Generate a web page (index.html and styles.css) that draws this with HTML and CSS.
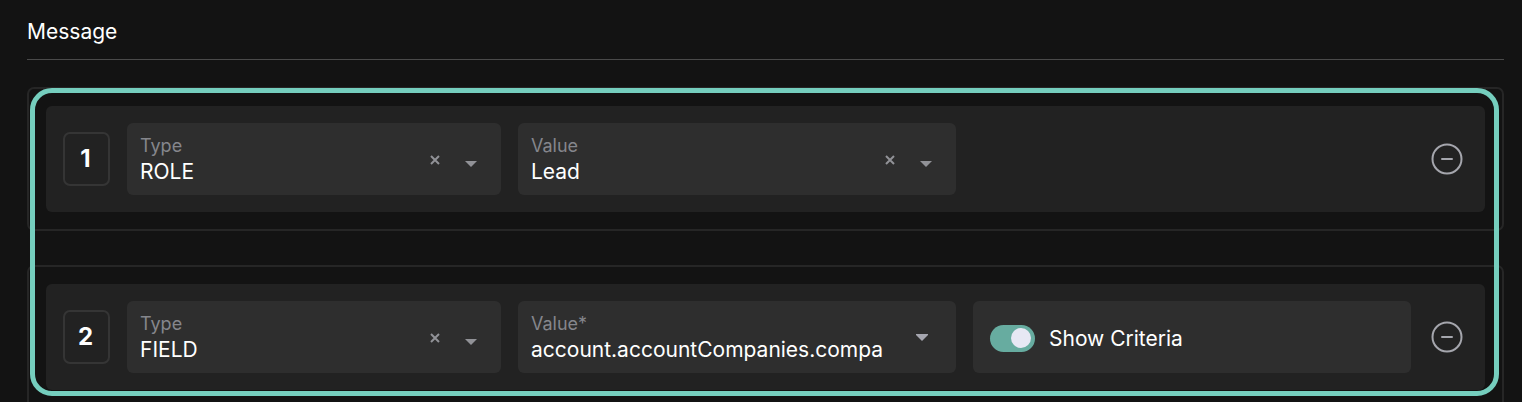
FILE: index.html
```html
<!DOCTYPE html>
<html lang="en">
<head>
    <meta charset="UTF-8">
    <meta name="viewport" content="width=device-width, initial-scale=1.0">
    <title>Message</title>
    <link rel="stylesheet" href="styles.css">
</head>
<body>

    <h2 class="section-title">Message</h2>

    <div class="groups">
        <div class="group">
            <div class="row">
                <div class="row-number">1</div>

                <div class="field">
                    <div class="field-text">
                        <label for="type1">Type</label>
                        <select id="type1">
                            <option selected>ROLE</option>
                            <option>FIELD</option>
                        </select>
                    </div>
                    <button type="button" class="clear-button" aria-label="Clear type">
                        <svg width="10" height="10" viewBox="0 0 10 10"><path d="M1 1L9 9M9 1L1 9"/></svg>
                    </button>
                    <svg class="caret" width="12" height="6" viewBox="0 0 12 6"><path d="M0 0H12L6 6Z"/></svg>
                </div>

                <div class="field">
                    <div class="field-text">
                        <label for="value1">Value</label>
                        <select id="value1">
                            <option selected>Lead</option>
                        </select>
                    </div>
                    <button type="button" class="clear-button" aria-label="Clear value">
                        <svg width="10" height="10" viewBox="0 0 10 10"><path d="M1 1L9 9M9 1L1 9"/></svg>
                    </button>
                    <svg class="caret" width="12" height="6" viewBox="0 0 12 6"><path d="M0 0H12L6 6Z"/></svg>
                </div>

                <button type="button" class="remove-button" aria-label="Remove row 1">
                    <svg width="32" height="32" viewBox="0 0 32 32"><circle cx="16" cy="16" r="14.5"/><path d="M11 16H21"/></svg>
                </button>
            </div>
        </div>

        <div class="group">
            <div class="row">
                <div class="row-number">2</div>

                <div class="field">
                    <div class="field-text">
                        <label for="type2">Type</label>
                        <select id="type2">
                            <option>ROLE</option>
                            <option selected>FIELD</option>
                        </select>
                    </div>
                    <button type="button" class="clear-button" aria-label="Clear type">
                        <svg width="10" height="10" viewBox="0 0 10 10"><path d="M1 1L9 9M9 1L1 9"/></svg>
                    </button>
                    <svg class="caret" width="12" height="6" viewBox="0 0 12 6"><path d="M0 0H12L6 6Z"/></svg>
                </div>

                <div class="field field-search">
                    <div class="field-text">
                        <label for="value2">Value*</label>
                        <input type="text" id="value2" value="account.accountCompanies.compa">
                    </div>
                    <button type="button" class="open-button" aria-label="Open list">
                        <svg width="12" height="7" viewBox="0 0 12 7"><path d="M0 0H12V1L6 7L0 1Z"/></svg>
                    </button>
                </div>

                <label class="field field-switch">
                    <input type="checkbox" class="switch" checked>
                    <span>Show Criteria</span>
                </label>

                <button type="button" class="remove-button" aria-label="Remove row 2">
                    <svg width="32" height="32" viewBox="0 0 32 32"><circle cx="16" cy="16" r="14.5"/><path d="M11 16H21"/></svg>
                </button>
            </div>
        </div>

        <div class="highlight"></div>
    </div>

</body>
</html>
```
FILE: styles.css
```css
* {
    box-sizing: border-box;
}

body {
    font-family: 'Inter', 'Liberation Sans', sans-serif;
    font-size: 21px;
    background-color: #131313;
    color: #fff;
    margin: 0;
    padding: 18px 18px 0 27px;
    height: 100vh;
    overflow: hidden;
}

.section-title {
    margin: 0 0 27px;
    padding-bottom: 13px;
    border-bottom: 1px solid #4a4a4a;
    font-size: 21px;
    font-weight: 400;
    line-height: 28px;
}

.groups {
    position: relative;
    display: flex;
    flex-direction: column;
    gap: 34px;
}

.group {
    padding: 17px;
    border: 2px solid #262626;
    border-radius: 7px;
}

.row {
    display: grid;
    grid-template-columns: 47px 374fr 438fr 438fr 40px;
    align-items: center;
    gap: 17px;
    padding: 17px;
    border-radius: 6px;
    background-color: #222;
}

.row-number {
    display: flex;
    align-items: center;
    justify-content: center;
    height: 54px;
    padding: 0 2px 2px 0;
    border: 2px solid #353535;
    border-radius: 7px;
    font-size: 24px;
    font-weight: 700;
}

.field {
    display: flex;
    align-items: center;
    min-width: 0;
    height: 72px;
    padding: 0 24px 0 13px;
    border-radius: 6px;
    background-color: #2e2e2e;
}

.field-text {
    display: flex;
    flex: 1;
    flex-direction: column;
    min-width: 0;
    padding-top: 2px;
}

.field-text label {
    color: #85868c;
    font-size: 18px;
    line-height: 24px;
}

.field-text select,
.field-text input {
    appearance: none;
    width: 100%;
    height: 28px;
    margin: 0;
    padding: 0;
    border: none;
    outline: none;
    background: none;
    color: #fff;
    font: inherit;
    line-height: 28px;
}

button {
    display: flex;
    align-items: center;
    justify-content: center;
    padding: 0;
    border: none;
    background: none;
    cursor: pointer;
}

.clear-button {
    width: 22px;
    height: 24px;
    margin: 2px 19px 0 0;
}

.clear-button path {
    stroke: #919297;
    stroke-width: 2;
}

.caret {
    margin-top: 9px;
    fill: #919297;
}

.field-search {
    padding-right: 28px;
}

.open-button {
    width: 12px;
    height: 24px;
    margin-left: 28px;
    fill: #a5a6af;
}

.field-switch {
    gap: 14px;
    padding: 2px 17px 0;
    cursor: pointer;
}

.switch {
    appearance: none;
    display: flex;
    align-items: center;
    justify-content: flex-end;
    width: 45px;
    height: 27px;
    margin: 0;
    padding: 0 4px;
    border-radius: 14px;
    background-color: #67aca0;
    cursor: pointer;
}

.switch::before {
    content: "";
    width: 20px;
    height: 20px;
    border-radius: 50%;
    background-color: #e7e8f4;
}

.switch:not(:checked) {
    justify-content: flex-start;
    background-color: #555;
}

.remove-button {
    grid-column: 5;
    width: 38px;
    height: 38px;
}

.remove-button svg {
    fill: none;
    stroke: #a5a6ad;
    stroke-width: 2;
    stroke-linecap: round;
}

/* outline drawn over both groups */
.highlight {
    position: absolute;
    inset: 1px 5px 13px 3px;
    border: 5px solid #75cebe;
    border-radius: 22px;
    pointer-events: none;
}
```
